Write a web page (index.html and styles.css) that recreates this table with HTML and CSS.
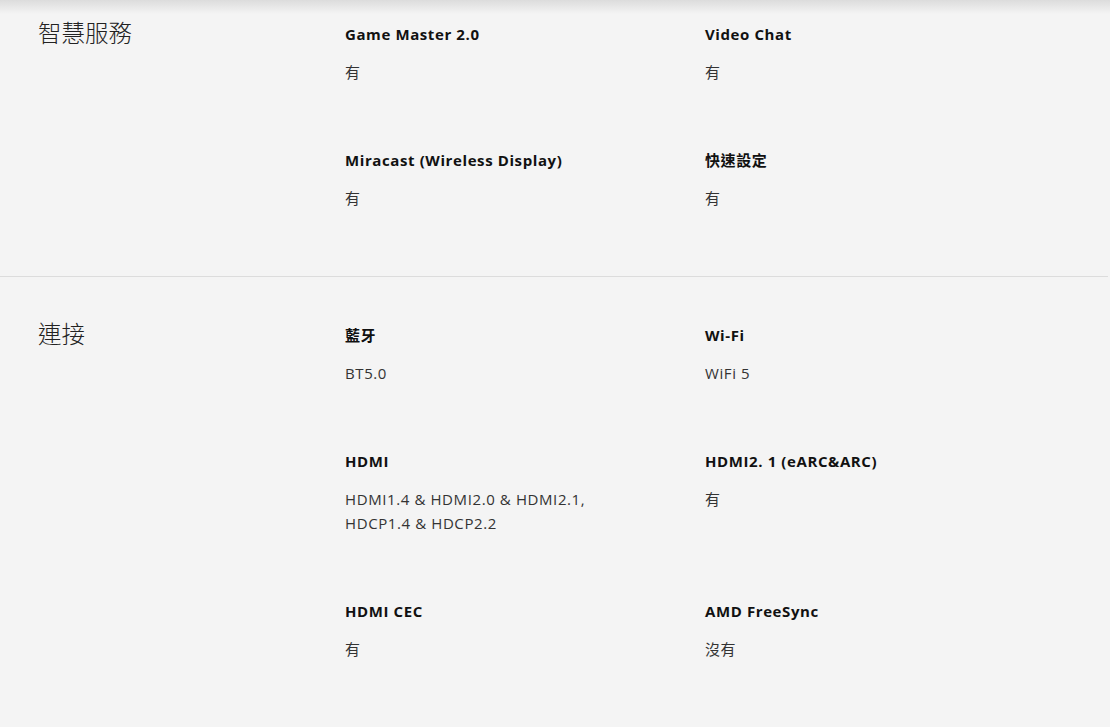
FILE: index.html
```html
<!DOCTYPE html>
<html lang="zh-Hant">
<head>
<meta charset="utf-8">
<title>規格</title>
<link rel="stylesheet" href="styles.css">
</head>
<body>
<div class="page">
  <section class="spec-section first">
    <h2 class="spec-heading">智慧服務</h2>
    <div class="spec-grid">
      <div class="spec-item">
        <div class="spec-label">Game Master 2.0</div>
        <div class="spec-value">有</div>
      </div>
      <div class="spec-item">
        <div class="spec-label">Video Chat</div>
        <div class="spec-value">有</div>
      </div>
      <div class="spec-item">
        <div class="spec-label">Miracast (Wireless Display)</div>
        <div class="spec-value">有</div>
      </div>
      <div class="spec-item">
        <div class="spec-label">快速設定</div>
        <div class="spec-value">有</div>
      </div>
    </div>
  </section>
  <section class="spec-section">
    <h2 class="spec-heading">連接</h2>
    <div class="spec-grid">
      <div class="spec-item">
        <div class="spec-label">藍牙</div>
        <div class="spec-value">BT5.0</div>
      </div>
      <div class="spec-item">
        <div class="spec-label">Wi-Fi</div>
        <div class="spec-value">WiFi 5</div>
      </div>
      <div class="spec-item">
        <div class="spec-label">HDMI</div>
        <div class="spec-value">HDMI1.4 &amp; HDMI2.0 &amp; HDMI2.1,<br>HDCP1.4 &amp; HDCP2.2</div>
      </div>
      <div class="spec-item">
        <div class="spec-label">HDMI2. 1 (eARC&amp;ARC)</div>
        <div class="spec-value">有</div>
      </div>
      <div class="spec-item">
        <div class="spec-label">HDMI CEC</div>
        <div class="spec-value">有</div>
      </div>
      <div class="spec-item">
        <div class="spec-label">AMD FreeSync</div>
        <div class="spec-value">沒有</div>
      </div>
    </div>
  </section>
</div>
</body>
</html>
```
FILE: styles.css
```css
html, body {
  margin: 0;
  padding: 0;
}
body {
  background-color: #f4f4f4;
  background-image: linear-gradient(#dcdcdc, #f4f4f4 14px);
  background-repeat: no-repeat;
  font-family: "Open Sans", "Noto Sans CJK TC", sans-serif;
  color: #333;
}
.page {
  width: 1108px;
}
.spec-section {
  display: grid;
  grid-template-columns: 307px 1fr;
  padding: 48px 0 0 38px;
  border-bottom: 1px solid #dcdcdc;
}
.spec-section.first {
  padding-top: 24px;
}
.spec-section:last-child {
  border-bottom: none;
}
.spec-heading {
  margin: 0;
  font-family: "Noto Sans CJK TC", sans-serif;
  font-weight: 300;
  font-size: 23.5px;
  line-height: 16px;
  color: #222;
}
.spec-grid {
  display: grid;
  grid-template-columns: 360px 360px;
}
.spec-item {
  padding-bottom: 66px;
}
.spec-label {
  font-weight: 700;
  font-size: 15px;
  line-height: 20px;
  letter-spacing: 0.6px;
  color: #111;
  margin-bottom: 16px;
}
.spec-value {
  font-size: 15px;
  line-height: 24px;
  letter-spacing: 0.6px;
  color: #333;
}
```
